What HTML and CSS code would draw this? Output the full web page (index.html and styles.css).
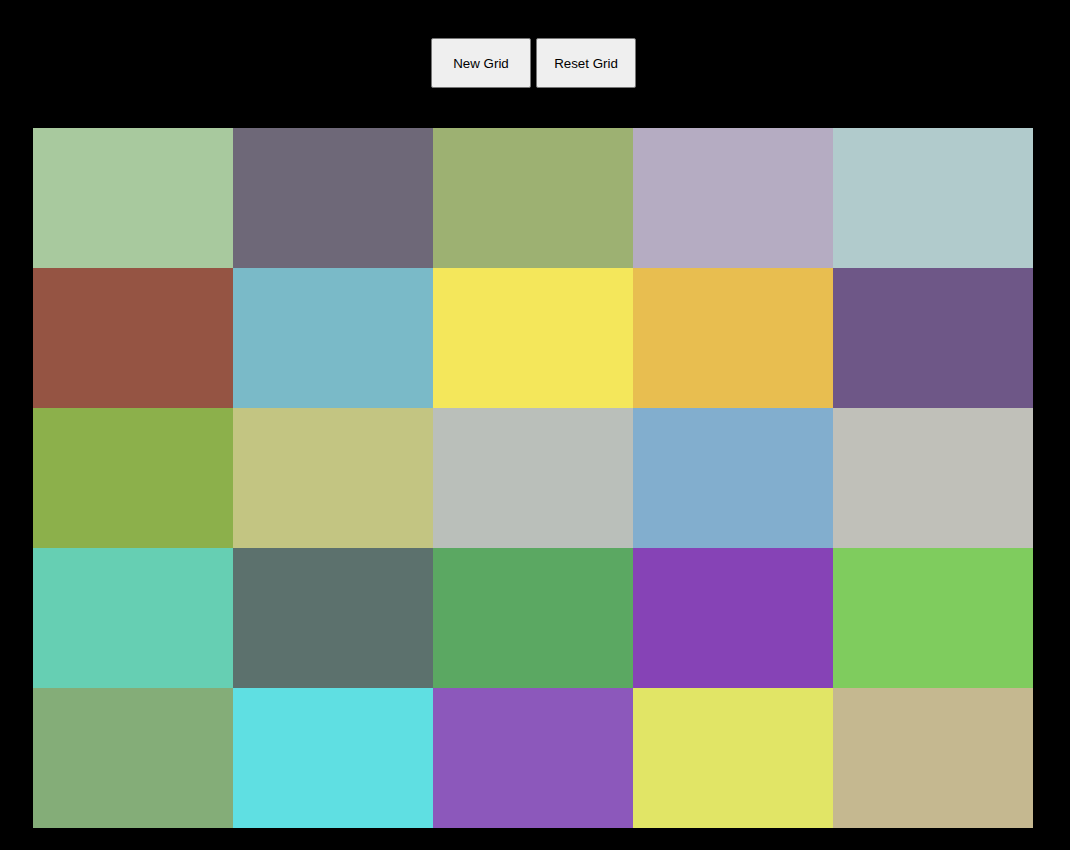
FILE: index.html
```html
<!DOCTYPE html>
<html lang="en">
<head>
    <meta charset="UTF-8">
    <meta name="viewport" content="width=device-width, initial-scale=1.0">
    <title>Color Grid</title>
    <link rel="stylesheet" href="styles.css">
</head>
<body>
    <div class="wrap">
        <div class="controls">
            <button class="btn">New Grid</button>
            <button class="btn">Reset Grid</button>
        </div>
        <div class="grid" id="grid">
            <div class="cell" style="background:#a8c99e"></div>
            <div class="cell" style="background:#6e6878"></div>
            <div class="cell" style="background:#9db172"></div>
            <div class="cell" style="background:#b5acc2"></div>
            <div class="cell" style="background:#b1cbcc"></div>

            <div class="cell" style="background:#955443"></div>
            <div class="cell" style="background:#7abac8"></div>
            <div class="cell" style="background:#f4e75b"></div>
            <div class="cell" style="background:#e8be50"></div>
            <div class="cell" style="background:#6e5787"></div>

            <div class="cell" style="background:#8cb04b"></div>
            <div class="cell" style="background:#c3c582"></div>
            <div class="cell" style="background:#babfba"></div>
            <div class="cell" style="background:#82aece"></div>
            <div class="cell" style="background:#c0c0b9"></div>

            <div class="cell" style="background:#66cfb3"></div>
            <div class="cell" style="background:#5c716d"></div>
            <div class="cell" style="background:#5ba862"></div>
            <div class="cell" style="background:#8643b6"></div>
            <div class="cell" style="background:#7fcc5e"></div>

            <div class="cell" style="background:#84ad78"></div>
            <div class="cell" style="background:#5fdfe2"></div>
            <div class="cell" style="background:#8c58bb"></div>
            <div class="cell" style="background:#e1e566"></div>
            <div class="cell" style="background:#c5b890"></div>
        </div>
    </div>
</body>
</html>
```

FILE: styles.css
```css
body {
    margin: 0;
    background: black;
    font-family: "Liberation Sans", Arial, sans-serif;
}
.wrap {
    width: 1000px;
    margin-left: 33px;
    padding-top: 38px;
}
.controls {
    display: flex;
    justify-content: center;
    gap: 5px;
    padding-left: 1px;
    margin-bottom: 40px;
}
.btn {
    width: 100px;
    height: 50px;
    background: #efefef;
    border: 1px solid #767676;
    border-radius: 2px;
    font-family: "Liberation Sans", Arial, sans-serif;
    font-size: 13.33px;
    color: black;
    cursor: pointer;
}
.grid {
    display: grid;
    grid-template-columns: repeat(5, 200px);
    grid-auto-rows: 140px;
}
```
